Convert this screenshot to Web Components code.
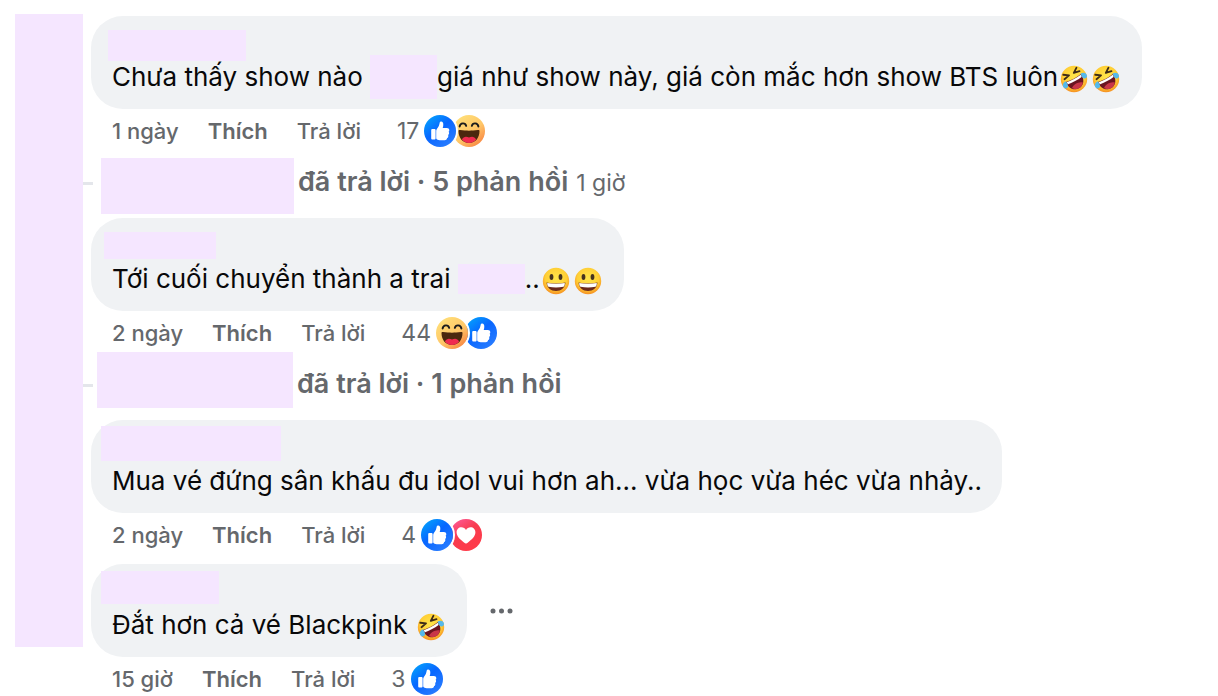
<!DOCTYPE html>
<html lang="vi">
<head>
<meta charset="utf-8">
<meta name="viewport" content="width=device-width, initial-scale=1">
<title>Bình luận</title>
<style>
  body { margin: 0; background: #fff; font-family: Inter, "Liberation Sans", sans-serif; color: #080809; }
</style>
</head>
<body>
<comment-thread>
  <comment-item>
    <comment-bubble slot="bubble" style="--name-x:-4px;--name-y:14px;--name-w:138px;--name-h:31px">Chưa thấy show nào <redacted-mark style="--w:67px;--h:44px"></redacted-mark>giá như show này, giá còn mắc hơn show BTS luôn<emoji-icon name="rofl"></emoji-icon><emoji-icon name="rofl"></emoji-icon></comment-bubble>
    <comment-meta slot="meta" time="1 ngày" count="17" reactions="like haha"></comment-meta>
    <reply-summary slot="replies" style="--mark-x:10px;--mark-y:5px;--mark-w:193px">đã trả lời · 5 phản hồi<span slot="time">1 giờ</span></reply-summary>
  </comment-item>
  <comment-item>
    <comment-bubble slot="bubble" style="--name-x:-8px;--name-y:14px;--name-w:112px;--name-h:27px">Tới cuối chuyển thành a trai <redacted-mark style="--w:67px;--h:30px"></redacted-mark>..<emoji-icon name="grin"></emoji-icon><emoji-icon name="grin"></emoji-icon></comment-bubble>
    <comment-meta slot="meta" time="2 ngày" count="44" reactions="haha like"></comment-meta>
    <reply-summary slot="replies" style="--mark-x:6px;--mark-y:-3px;--mark-w:196px">đã trả lời · 1 phản hồi</reply-summary>
  </comment-item>
  <comment-item>
    <comment-bubble slot="bubble" style="--name-x:-11px;--name-y:6px;--name-w:180px;--name-h:35px">Mua vé đứng sân khấu đu idol vui hơn ah... vừa học vừa héc vừa nhảy..</comment-bubble>
    <comment-meta slot="meta" time="2 ngày" count="4" reactions="like love"></comment-meta>
  </comment-item>
  <comment-item>
    <comment-bubble slot="bubble" style="--name-x:-11px;--name-y:7px;--name-w:118px;--name-h:33px">Đắt hơn cả vé Blackpink <emoji-icon name="rofl"></emoji-icon></comment-bubble>
    <more-button slot="more"></more-button>
    <comment-meta slot="meta" time="15 giờ" count="3" reactions="like"></comment-meta>
  </comment-item>
</comment-thread>

<script>
const define = (name, html, setup) => {
  const template = document.createElement('template');
  template.innerHTML = html;
  customElements.define(name, class extends HTMLElement {
    constructor() {
      super();
      this.attachShadow({ mode: 'open' }).append(template.content.cloneNode(true));
    }
    connectedCallback() { if (setup) setup(this, this.shadowRoot); }
  });
};

define('comment-thread', `
  <style>
    :host { display: flex; gap: 8px; padding: 14px 16px 0 15px; }
    .rail { flex: none; width: 68px; margin-bottom: 48px; background: #f5e6ff; }
    main { flex: 1; min-width: 0; padding-top: 2px; }
    main ::slotted(comment-item:last-child) { --tail: 0px; --meta-tail: 0px; }
  </style>
  <div class="rail"></div>
  <main><slot></slot></main>`);

define('comment-item', `
  <style>
    :host { display: block; padding-bottom: var(--tail, 7px); }
    .row { display: flex; align-items: center; gap: 22px; }
  </style>
  <div class="row"><slot name="bubble"></slot><slot name="more"></slot></div>
  <slot name="meta"></slot>
  <slot name="replies"></slot>`);

define('comment-bubble', `
  <style>
    :host { display: block; box-sizing: border-box; padding: 0 20px 16px 21px; border-radius: 32px; background: #f0f2f4; }
    .name { display: flex; align-items: flex-start; height: 45px; }
    .name i { width: var(--name-w); height: var(--name-h); margin: var(--name-y) 0 0 var(--name-x); background: #f5e6ff; }
    p { margin: 0; font-size: 26px; line-height: 32px; }
  </style>
  <div class="name"><i></i></div>
  <p><slot></slot></p>`);

define('redacted-mark', `
  <style>
    :host { display: inline-flex; align-items: center; width: var(--w); height: 32px; vertical-align: top; }
    i { flex: none; width: 100%; height: var(--h); background: #f5e6ff; }
  </style><i></i>`);

define('comment-meta', `
  <style>
    :host { display: flex; align-items: center; height: 33px; padding: 5px 0 var(--meta-tail, 6px) 21px; color: #65686c; font-size: 22px; line-height: 28px; }
    button { margin: 0 0 0 29px; padding: 0; border: 0; background: none; color: inherit; font: inherit; font-weight: 500; cursor: pointer; }
    .like { font-weight: 600; }
    time { font-weight: 500; }
    .count { display: flex; align-items: center; gap: 5px; margin-left: 36px; font-weight: 400; font-size: 23px; }
    .icons { display: flex; }
  </style>
  <time></time><button class="like">Thích</button><button>Trả lời</button>
  <button class="count"><span></span><div class="icons"></div></button>`,
(host, root) => {
  root.querySelector('time').textContent = host.getAttribute('time');
  root.querySelector('span').textContent = host.getAttribute('count');
  root.querySelector('.icons').innerHTML = host.getAttribute('reactions').split(' ')
    .map((n, i) => `<reaction-icon name="${n}" style="z-index:${2 - i}"></reaction-icon>`).join('');
});

define('reply-summary', `
  <style>
    :host { display: flex; align-items: center; position: relative; height: 58px; color: #65686c; }
    :host::before { content: ""; position: absolute; left: -8px; top: 29px; width: 10px; height: 3px; background: #e4e6eb; }
    .mark { align-self: flex-start; flex: none; width: var(--mark-w); height: 56px; margin: var(--mark-y) 0 0 var(--mark-x); background: #f5e6ff; }
    button { margin: 0 0 0 4px; padding: 0; border: 0; background: none; color: inherit; font: inherit; font-size: 27px; font-weight: 600; line-height: 32px; cursor: pointer; }
    ::slotted(span) { margin-left: 8px; font-size: 23px; font-weight: 400; }
  </style>
  <div class="mark"></div><button><slot></slot><slot name="time"></slot></button>`);

define('more-button', `
  <style>
    :host { display: block; }
    button { display: flex; padding: 0; border: 0; background: none; cursor: pointer; }
  </style>
  <button aria-label="Khác"><svg width="26" height="6" viewBox="0 0 26 6" fill="#65686c"><circle cx="4" cy="3" r="2.5"/><circle cx="12.5" cy="3" r="2.5"/><circle cx="21" cy="3" r="2.5"/></svg></button>`);

const reactions = {
  like: `<defs><linearGradient id="g" x1="0" y1="0" x2=".8" y2="1"><stop stop-color="#02adfc"/><stop offset=".5" stop-color="#0866ff"/><stop offset="1" stop-color="#2b7eff"/></linearGradient></defs>
    <circle cx="16" cy="16" r="16" fill="url(#g)"/>
    <path d="M8.5 14h1.800c.8 0 1.300.5 1.300 1.300v8c0 .8-.5 1.300-1.300 1.300H8.500c-.8 0-1.300-.5-1.300-1.300v-8c0-.8.5-1.300 1.300-1.300ZM15.800 7.300c.2-.6.7-.9 1.300-.8 1.600.2 2.300 1.500 2.200 3.200 0 1.200-.2 2.300-.6 3.300h4.200c1.400 0 2.400.9 2.400 2.200 0 .7-.2 1.200-.7 1.600.4.4.6.9.5 1.500 0 .8-.4 1.400-1 1.800.2.4.3.8.2 1.300-.1.8-.6 1.400-1.300 1.600.1 1.400-.8 2.200-2.400 2.200h-3.500c-2 0-3.400-.4-4.300-1-.4-.2-.6-.6-.6-1v-7.100c0-.8.2-1.500.8-2.300 1.700-2.100 2.200-3.400 2.800-6.500Z" fill="#fff"/>`,
  love: `<defs><linearGradient id="g" x1="0" y1="0" x2=".7" y2="1"><stop stop-color="#ff60a4"/><stop offset=".5" stop-color="#f83c50"/><stop offset="1" stop-color="#ff3b49"/></linearGradient></defs>
    <circle cx="16" cy="16" r="16" fill="url(#g)"/>
    <path d="M16 24.600c-.5 0-1-.3-2-1.100C10 20.400 6.600 17.300 6.600 13.300c0-2.900 2.100-5 4.800-5 2 0 3.600 1 4.600 2.800 1-1.800 2.600-2.800 4.600-2.800 2.700 0 4.800 2.100 4.800 5 0 4-3.400 7.100-7.400 10.200-1 .8-1.500 1.100-2 1.100Z" fill="#fff"/>`,
  haha: `<defs><linearGradient id="g" x1=".1" y1="0" x2=".9" y2="1"><stop stop-color="#ffe27a"/><stop offset=".55" stop-color="#ffc768"/><stop offset="1" stop-color="#f77b3c"/></linearGradient></defs>
    <circle cx="16" cy="16" r="16" fill="url(#g)"/>
    <path d="M5.500 16c0-.8.600-1 1.500-.900 7 .8 11 .8 18 0 .9-.1 1.500.1 1.500.9 0 7-4.200 12-10.500 12S5.500 23 5.500 16Z" fill="#4b280e"/>
    <path d="M8.900 24.500c1.600-3.200 4.400-3.200 7.100-2 2.700-1.200 5.500-1.200 7.100 2C21.400 26.800 19 28 16 28s-5.400-1.200-7.100-3.500Z" fill="#f02c50"/>
    <path d="M6.600 11.500c.6-3.900 5.600-4.300 6.600-.6M18.800 10.900c1-3.700 6-3.300 6.600.6" fill="none" stroke="#1c1c1d" stroke-width="1.900" stroke-linecap="round"/>`
};
define('reaction-icon', `
  <style>
    :host { display: block; position: relative; width: 32px; height: 32px; border-radius: 50%; box-shadow: 0 0 0 2px #fff; }
    :host(:not(:first-child)) { margin-left: -3px; }
    svg { display: block; }
  </style><svg width="32" height="32" viewBox="0 0 32 32"></svg>`,
(host, root) => { root.querySelector('svg').innerHTML = reactions[host.getAttribute('name')]; });

const face = `<defs><radialGradient id="f" cx=".5" cy=".4" r=".62"><stop stop-color="#ffe64b"/><stop offset=".65" stop-color="#ffcf35"/><stop offset="1" stop-color="#f58a20"/></radialGradient></defs>`;
const emojis = {
  grin: face + `<circle cx="14" cy="14" r="13.200" fill="url(#f)"/>
    <ellipse cx="9.500" cy="10" rx="1.900" ry="3" fill="#46331f"/><ellipse cx="18.500" cy="10" rx="1.900" ry="3" fill="#46331f"/>
    <path d="M4.500 15.500c6 1.200 13 1.200 19 0-.3 5-4.400 8.500-9.500 8.500s-9.200-3.500-9.500-8.500Z" fill="#6b2a1c"/>
    <path d="M5.200 16c5.900 1 11.700 1 17.600 0 .1 2-.6 3.500-1.300 3.800-5 .9-10 .9-15 0-.7-.4-1.400-1.800-1.300-3.800Z" fill="#fff"/>`,
  rofl: face + `<circle cx="14" cy="14" r="13.200" fill="url(#f)"/>
    <g transform="rotate(-28 14 14)">
    <path d="M5.500 12.800c5.500 1 11.500 1 17 0 .8 6.800-2.800 11.700-8.500 11.700S4.700 19.600 5.500 12.800Z" fill="#6b1420"/>
    <path d="M7.800 21.300c2.800-3 9.600-3 12.400 0-1.600 2.100-3.700 3.200-6.200 3.200s-4.600-1.100-6.200-3.200Z" fill="#c93648"/>
    <path d="M6 13.300c5.300.9 10.700.9 16 0 .1 1.200 0 2-.4 2.500-5 .8-10.200.8-15.200 0-.4-.5-.5-1.300-.4-2.500Z" fill="#fff"/>
    <path d="M6.500 5.200l4.800 3.300-5.800 1.200M21.500 5.200l-4.800 3.300 5.800 1.200" fill="none" stroke="#3d2a18" stroke-width="1.800" stroke-linecap="round" stroke-linejoin="round"/>
    <path d="M5.600 12.200c-3 0-5.100 1.700-4.800 4.200.2 1.900 1.700 2.800 3.200 2.300 2-.6 2.300-3.200 1.600-6.500ZM22.400 12.200c3 0 5.100 1.700 4.800 4.200-.2 1.900-1.700 2.800-3.200 2.300-2-.6-2.300-3.200-1.600-6.500Z" fill="#55b9ea"/></g>`
};
define('emoji-icon', `
  <style>
    :host { display: inline-block; width: 28px; height: 32px; margin: 0 2px; vertical-align: top; }
    svg { display: block; margin-top: 4px; }
  </style><svg width="28" height="28" viewBox="0 0 28 28"></svg>`,
(host, root) => { root.querySelector('svg').innerHTML = emojis[host.getAttribute('name')]; });
</script>
</body>
</html>
